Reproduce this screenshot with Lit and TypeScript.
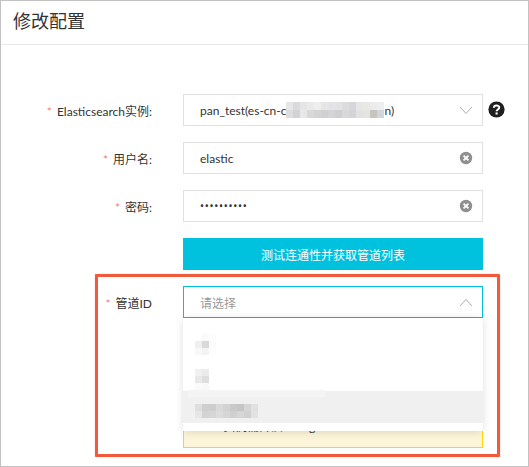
import { LitElement, html, css } from "lit";
import { customElement } from "lit/decorators.js";

const mosaic = (rows: string[][]) => html`<span class="mosaic" style="grid-template-columns:repeat(${rows[0].length},7px)"
  >${rows.flat().map((c) => html`<i style="background:${c}"></i>`)}</span
>`;

const chevron = (up: boolean) => html`<svg class="chev" width="14" height="9" viewBox="0 0 14 9">
  <path d="${up ? "M1 8 L7 1.5 L13 8" : "M1 1 L7 7.5 L13 1"}" fill="none" stroke="#a9adb5" stroke-width="1" />
</svg>`;

const clear = html`<svg class="clear" width="14" height="14" viewBox="0 0 14 14">
  <circle cx="7" cy="7" r="6.2" fill="#8f8f8f" />
  <path d="M4.6 4.6 L9.4 9.4 M9.4 4.6 L4.6 9.4" stroke="#fff" stroke-width="1.8" />
</svg>`;

const help = html`<svg class="help" width="17" height="17" viewBox="0 0 18 18">
  <circle cx="9" cy="9" r="8.6" fill="#1f1f1f" />
  <path d="M6.2 7.2 C6.2 3.9 11.9 3.9 11.9 7 C11.9 9 9.1 9 9.1 10.9" fill="none" stroke="#fff" stroke-width="2.1" />
  <rect x="8" y="12.1" width="2.2" height="2.2" fill="#fff" />
</svg>`;

const T = "transparent";

@customElement("app-root")
export class AppRoot extends LitElement {
  static styles = css`
    :host {
      display: block;
      position: relative;
      width: 529px;
      height: 467px;
      box-sizing: border-box;
      border: 1px solid #c2c2c2;
      background: #fff;
      overflow: hidden;
      font-family: "Lato", "Noto Sans CJK SC", sans-serif;
      font-size: 12px;
      color: #333;
    }
    .header {
      height: 43px;
      border-bottom: 1px solid #e8e8e8;
      padding-left: 12px;
      font-size: 18px;
      line-height: 41px;
      color: #333;
    }
    .form {
      display: flex;
      flex-direction: column;
      gap: 16px;
      padding-top: 49px;
    }
    .row {
      display: grid;
      grid-template-columns: 182px 300px 22px;
      align-items: center;
    }
    .label {
      justify-self: end;
      padding-right: 31px;
      padding-top: 1px;
      white-space: nowrap;
    }
    .star {
      color: #f77;
      font-size: 12px;
      margin-right: 5px;
    }
    .control {
      box-sizing: border-box;
      height: 32px;
      border: 1px solid #e1e1e1;
      padding: 0 8px 0 16px;
      display: flex;
      align-items: center;
      justify-content: space-between;
      white-space: nowrap;
      position: relative;
    }
    .value {
      display: flex;
      align-items: center;
    }
    .dots {
      font-family: "Roboto", sans-serif;
      letter-spacing: 0.7px;
      font-size: 12px;
      color: #333;
    }
    .help {
      justify-self: end;
      margin-bottom: 2px;
    }
    .chev {
      flex: none;
      margin-right: 1px;
    }
    .clear {
      flex: none;
      margin-right: 1px;
      margin-bottom: 1px;
    }
    .mosaic {
      display: inline-grid;
      grid-auto-rows: 8px;
    }
    .mosaic i {
      display: block;
    }
    .button {
      grid-column: 2;
      height: 32px;
      background: #00c1de;
      color: #fff;
      display: flex;
      align-items: center;
      justify-content: center;
    }
    .active {
      border-color: #00c1de;
    }
    .placeholder {
      color: #999;
    }
    .select-wrap {
      position: relative;
    }
    .dropdown {
      position: absolute;
      left: 0;
      right: 0;
      top: 32px;
      height: 113px;
      box-sizing: border-box;
      background: #fff;
      padding-top: 9px;
      box-shadow: 0 1px 8px rgba(0, 0, 0, 0.13);
      z-index: 2;
    }
    .option {
      height: 32px;
      box-sizing: border-box;
      padding-left: 12px;
      position: relative;
      display: flex;
      align-items: flex-start;
    }
    .option .mosaic {
      grid-auto-rows: 7px;
      position: relative;
    }
    .o1 {
      padding-top: 7px;
    }
    .o2 {
      padding-top: 10px;
    }
    .o3 {
      padding-top: 13px;
      background: #f0f0f0;
    }
    .band {
      position: absolute;
      left: 5px;
      top: -1px;
      width: 137px;
      height: 7px;
      background: #f4f4f4;
    }
    .alert {
      grid-column: 2;
      box-sizing: border-box;
      height: 114px;
      border: 1px solid #ffd800;
      background: #fdf5d9;
      padding: 83px 0 0 16px;
      line-height: 18px;
      color: #333;
      white-space: nowrap;
    }
    .note {
      position: absolute;
      left: 94px;
      top: 273px;
      width: 405px;
      height: 183px;
      box-sizing: border-box;
      border: 3px solid #f15a3a;
      border-radius: 1px;
      box-shadow: 0 0 1px rgba(241, 90, 58, 0.8);
      pointer-events: none;
      z-index: 3;
    }
  `;

  render() {
    return html`
      <div class="header">修改配置</div>
      <div class="form">
        <div class="row">
          <div class="label"><span class="star">*</span>Elasticsearch实例:</div>
          <div class="control">
            <span class="value"
              >pan_test(es-cn-c${mosaic([
                ["#e6e6e6", "#dadadd", "#e4e6e6", "#e9eaea", "#eeeeee", "#e6e6e6", "#e2e3e6", "#e2e2e2", "#dcdcdf", "#d8d6dc", "#e6e6e6", "#e8e8e6", "#ebebeb", "#eeeeee"],
                ["#dddde0", "#d3d3d6", "#e6e8e8", "#d8d8d8", "#d4d4d6", "#d0d0d2", "#d4d4d6", "#cfcfd2", "#d8d8d8", "#d4d4d8", "#e2e2e0", "#e4e4e0", "#c8c4bd", "#d0d6d9"],
              ])}n)</span
            >
            ${chevron(false)}
          </div>
          ${help}
        </div>
        <div class="row">
          <div class="label"><span class="star">*</span>用户名:</div>
          <div class="control"><span>elastic</span>${clear}</div>
        </div>
        <div class="row">
          <div class="label"><span class="star">*</span>密码:</div>
          <div class="control"><span class="dots">••••••••••</span>${clear}</div>
        </div>
        <div class="row"><div class="button">测试连通性并获取管道列表</div></div>
        <div class="row">
          <div class="label"><span class="star">*</span>管道ID</div>
          <div class="select-wrap">
            <div class="control active"><span class="placeholder">请选择</span>${chevron(true)}</div>
            <div class="dropdown">
              <div class="option o1">
                ${mosaic([
                  [T, "#fafafa", "#fdfdfd"],
                  ["#efefef", "#d9d9d9", "#fbfbfb"],
                  ["#f8f8f8", "#f3f3f3", "#fdfdfd"],
                ])}
              </div>
              <div class="option o2">
                ${mosaic([
                  ["#f0f0f0", "#ebebeb"],
                  ["#e8e8e8", "#dedede"],
                  ["#fafafa", "#f8f8f8"],
                ])}
              </div>
              <div class="option o3">
                <span class="band"></span>
                ${mosaic([
                  ["#dedede", "#cfcfcf", "#cdcdcd", "#d9d9d9", "#d2d2d2", "#c9c9c9", "#c5c5c5", "#d5d5d5", "#e0e0e0"],
                  ["#e6e6e6", "#d3d3d3", "#d6d6d6", "#dcdcdc", "#d6d6d6", "#d0d0d0", "#d6d6d6", "#d0d0d0", "#e2e2e2"],
                ])}
              </div>
            </div>
          </div>
        </div>
        <div class="row">
          <div class="alert">RDS实例需开启binlog</div>
        </div>
      </div>
      <div class="note"></div>
    `;
  }
}
